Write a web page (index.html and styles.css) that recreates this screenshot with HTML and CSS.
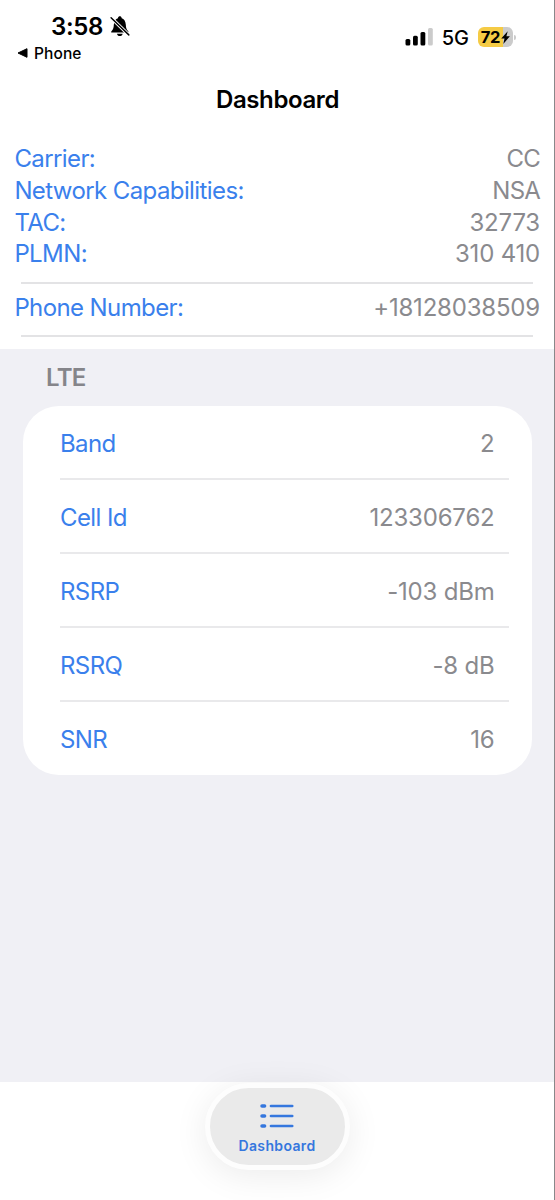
FILE: index.html
```html
<!DOCTYPE html>
<html lang="en">
<head>
<meta charset="utf-8">
<title>Dashboard</title>
<link rel="stylesheet" href="styles.css">
</head>
<body>
<div class="screen">
  <header class="status">
    <div class="status-left">
      <div class="clock">
        <span class="time">3:58</span>
        <svg class="bell" width="20" height="21" viewBox="0 0 22 22" preserveAspectRatio="none">
          <path d="M2 17.400c-.8 0-1-.9-.4-1.500C3.800 13.700 4 12.500 4.200 9.200 4.500 5 6.300 3 8.700 2.300 9 .9 9.800.3 10.800.3s1.800.6 2.100 2c2.400.7 4.200 2.700 4.500 6.900.2 3.300.4 4.500 2.600 6.700.6.6.4 1.500-.4 1.500zM7.700 18.500h6.200c-.2 1.500-1.500 2.400-3.100 2.400s-2.900-.9-3.100-2.400z" fill="#000"/>
          <path d="M1.200 1.800 20.700 19.800" stroke="#fff" stroke-width="3.600"/>
          <path d="M1.200 1.800 20.700 19.800" stroke="#000" stroke-width="1.600" stroke-linecap="round"/>
        </svg>
      </div>
      <div class="back">
        <svg width="11" height="10" viewBox="0 0 11 10"><path d="M1 5 10 .7v8.600z" fill="#000" stroke="#000" stroke-width="1" stroke-linejoin="round"/></svg>
        <span>Phone</span>
      </div>
    </div>
    <div class="status-right">
      <svg class="signal" width="28" height="18" viewBox="0 0 28 18">
        <rect x="0.500" y="11" width="4.800" height="6.500" rx="1.500"/>
        <rect x="8" y="7.800" width="4.800" height="9.700" rx="1.500"/>
        <rect x="15.500" y="4" width="4.800" height="13.500" rx="1.500"/>
        <rect x="23" y="0" width="4.800" height="17.500" rx="1.500" fill="#cbcbcb"/>
      </svg>
      <span class="network">5G</span>
      <div class="battery">
        <span class="level">72</span>
        <svg width="9" height="13" viewBox="0 0 9 13"><path d="M6.700.2.200 7.500h3.300L2.300 12.900 8.900 5.300H5.400z" fill="#000"/></svg>
      </div>
      <span class="battery-tip"></span>
    </div>
  </header>

  <h1 class="title">Dashboard</h1>

  <section class="summary">
    <div class="group">
      <div class="row"><span class="label">Carrier:</span><span class="value letters">CC</span></div>
      <div class="row"><span class="label">Network Capabilities:</span><span class="value letters">NSA</span></div>
      <div class="row"><span class="label">TAC:</span><span class="value">32773</span></div>
      <div class="row"><span class="label">PLMN:</span><span class="value">310 410</span></div>
    </div>
    <div class="group phone">
      <div class="row"><span class="label">Phone Number:</span><span class="value">+18128038509</span></div>
    </div>
  </section>

  <main class="content">
    <h2 class="section-title">LTE</h2>
    <div class="card">
      <div class="cell"><span class="label">Band</span><span class="value">2</span></div>
      <div class="cell"><span class="label">Cell Id</span><span class="value">123306762</span></div>
      <div class="cell"><span class="label">RSRP</span><span class="value">-103 dBm</span></div>
      <div class="cell"><span class="label">RSRQ</span><span class="value">-8 dB</span></div>
      <div class="cell"><span class="label">SNR</span><span class="value">16</span></div>
    </div>
  </main>

  <nav class="tabs">
    <div class="tab">
      <svg width="34" height="26" viewBox="0 0 34 26" fill="none" stroke="#3577de" stroke-linecap="round">
        <path d="M2 3h2.600M2 13h2.600M2 23h2.600" stroke-width="3.500"/>
        <path d="M11 3h21.200M11 13h21.200M11 23h21.200" stroke-width="2.700"/>
      </svg>
      <span class="tab-name">Dashboard</span>
    </div>
  </nav>
</div>
</body>
</html>
```
FILE: styles.css
```css
* { box-sizing: border-box; }

body {
  margin: 0;
  background: #fff;
  font-family: Inter, "Liberation Sans", sans-serif;
  color: #000;
}

.screen {
  width: 555px;
  height: 1200px;
  border-right: 1px solid #88888a;
  display: flex;
  flex-direction: column;
  overflow: hidden;
}

.status {
  height: 73px;
  display: flex;
  justify-content: space-between;
  padding: 11px 38px 0 17px;
}

.clock {
  display: flex;
  align-items: center;
  height: 30px;
  padding-left: 34px;
  gap: 7px;
}

.time {
  font-size: 24px;
  font-weight: 600;
  letter-spacing: -0.3px;
}

.back {
  display: flex;
  align-items: center;
  gap: 6px;
  height: 24px;
  font-size: 15.500px;
  font-weight: 500;
  letter-spacing: 0.1px;
}

.status-right {
  display: flex;
  align-items: center;
  height: 30px;
  margin-top: 11px;
}

.network {
  margin-left: 9px;
  padding-top: 1px;
  font-size: 20px;
  font-weight: 450;
  line-height: 30px;
}

.battery {
  display: flex;
  align-items: center;
  justify-content: center;
  gap: 1px;
  width: 35px;
  height: 20px;
  margin-left: 9px;
  border-radius: 6px;
  background: linear-gradient(to right, #f5cb45 72%, #cbcbcb 72%);
}

.level {
  font-size: 16.500px;
  font-weight: 650;
  line-height: 20px;
  letter-spacing: -0.3px;
}

.battery-tip {
  width: 2px;
  height: 5px;
  margin-left: 1px;
  border-radius: 0 2px 2px 0;
  background: #cbcbcb;
}

.title {
  margin: 0;
  height: 52px;
  padding-left: 1px;
  font-size: 24px;
  font-weight: 600;
  line-height: 53px;
  text-align: center;
  letter-spacing: -0.4px;
}

.summary {
  height: 223.500px;
  padding: 18px 14px 0;
}

.group::after {
  content: "";
  display: block;
  height: 1.500px;
  margin: 12px 7px 0;
  background: #e3e3e5;
}

.row {
  display: flex;
  justify-content: space-between;
  height: 31.800px;
  padding-left: 0.400px;
  font-size: 24px;
  line-height: 32.500px;
}

.phone { padding-top: 8px; }

.label {
  color: #3a80ec;
  font-weight: 380;
  letter-spacing: -0.600px;
}

.value {
  color: #8a8a8e;
  font-weight: 380;
  letter-spacing: -0.200px;
}

.letters { letter-spacing: -0.800px; }

.content {
  flex: 0 0 733px;
  padding: 0 22px 0 23px;
  background: #f0f0f5;
}

.section-title {
  margin: 0;
  height: 57.500px;
  padding-left: 23px;
  font-size: 24px;
  font-weight: 600;
  line-height: 57px;
  letter-spacing: -0.700px;
  color: #85858a;
}

.card {
  height: 369px;
  border-radius: 36px;
  background: #fff;
  padding: 0 23px 0 37px;
}

.cell {
  display: flex;
  justify-content: space-between;
  height: 74px;
  padding-right: 14.500px;
  border-bottom: 2px solid #e9e9eb;
  font-size: 24px;
  line-height: 76px;
}

.cell:last-child { border-bottom: 0; }

.tabs {
  flex: 1;
  display: flex;
  justify-content: center;
  align-items: flex-start;
  padding-top: 1px;
}

.tab {
  width: 145px;
  height: 87px;
  display: flex;
  flex-direction: column;
  align-items: center;
  padding-top: 15px;
  border: 5px solid #fdfdfd;
  border-radius: 44px;
  background: #eaeaea;
  box-shadow: 0 6px 34px rgba(0, 0, 0, 0.08);
}

.tab-name {
  margin-top: 8px;
  font-size: 14px;
  font-weight: 600;
  line-height: 18px;
  letter-spacing: 0.350px;
  color: #3577de;
}
```
